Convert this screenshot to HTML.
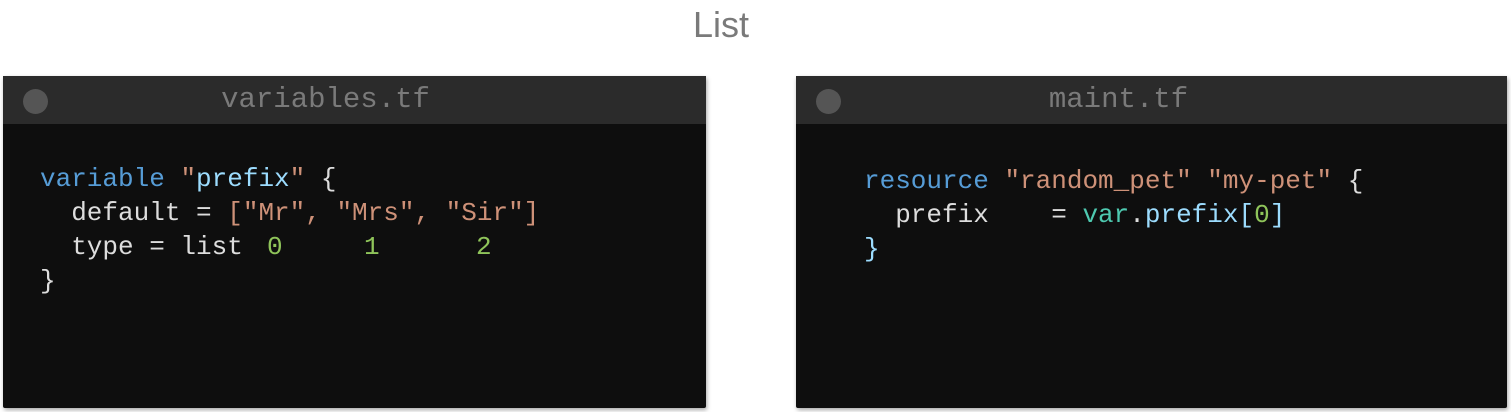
<!DOCTYPE html>
<html><head><style>
body{margin:0;width:1511px;height:412px;background:#fff;position:relative;overflow:hidden;font-family:"Liberation Mono",monospace}
.t{position:absolute;left:0;width:1442px;text-align:center;top:4px;font:300 36px "Liberation Sans",sans-serif;color:#7a7a7a}
.p{position:absolute;top:76px;height:332px;background:#0e0e0e;box-shadow:1px 2px 4px rgba(0,0,0,.35);border-radius:2px}
.h{height:48px;background:#2b2b2b;position:relative}
.d{position:absolute;left:20px;top:13px;width:25px;height:25px;border-radius:50%;background:#555}
.h span{position:absolute;left:0;right:0;text-align:center;top:7px;font-size:29px;color:#7a7a7a}
pre{margin:0;position:absolute;font:26px/34px "Liberation Mono",monospace;color:#ddd}
.k{color:#569cd6}.s{color:#ce9178}.v{color:#9cdcfe}.n{color:#8fc45a}.g{color:#4ec9b0}
.num{position:absolute;top:230px;font:26px/34px "Liberation Mono",monospace;color:#8fc45a}
</style></head><body>
<div class="t">List</div>
<div class="p" style="left:3px;width:703px"><div class="h"><div class="d"></div><span style="left:-58px">variables.tf</span></div>
<pre style="left:37px;top:86px"><span class="k">variable</span> <span class="s">"</span><span class="v">prefix</span><span class="s">"</span> {
  default = <span class="s">["Mr", "Mrs", "Sir"]</span>
  type = list
}</pre>
<div class="num" style="left:264px;top:154px">0</div>
<div class="num" style="left:361px;top:154px">1</div>
<div class="num" style="left:473px;top:154px">2</div>
</div>
<div class="p" style="left:796px;width:711px"><div class="h"><div class="d"></div><span style="left:-66px">maint.tf</span></div>
<pre style="left:68px;top:88px"><span class="k">resource</span> <span class="s">"random_pet"</span> <span class="s">"my-pet"</span> {
  prefix    = <span class="g">var</span>.<span class="v">prefix</span><span class="v">[</span><span class="n">0</span><span class="v">]</span>
<span class="v">}</span></pre></div>
</body></html>
